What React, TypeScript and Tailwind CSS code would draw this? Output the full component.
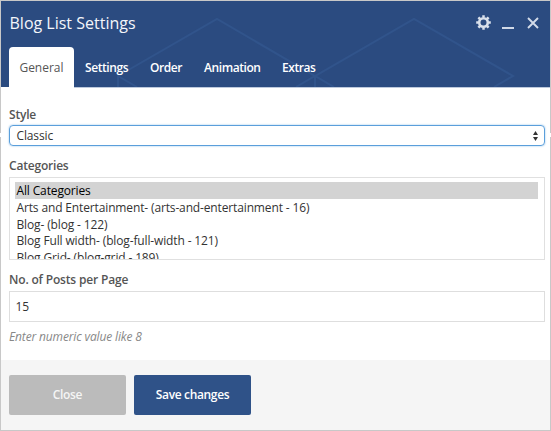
import React from "react";

const tabs = [
  { label: "Settings", cls: "ml-[11px] w-[65px]" },
  { label: "Order", cls: "w-[54px]" },
  { label: "Animation", cls: "w-[78px]" },
  { label: "Extras", cls: "w-[56px]" },
];

const categories = [
  "All Categories",
  "Arts and Entertainment- (arts-and-entertainment - 16)",
  "Blog- (blog - 122)",
  "Blog Full width- (blog-full-width - 121)",
  "Blog Grid- (blog-grid - 189)",
];

function Pattern() {
  return (
    <svg className="absolute inset-0" width="549" height="86" fill="none" stroke="#31548b" strokeWidth="2">
      <path d="M117 86V75L216 18L314 75L413 18L512 75L493 86M117 75L136 86M314 75V86M295 86L314 75L333 86" />
    </svg>
  );
}

function Header() {
  return (
    <header className="relative flex h-[86px] shrink-0 flex-col bg-[#2b4b80]">
      <Pattern />
      <div className="relative flex h-[46px] items-center pl-[8.5px] pr-[11px]">
        <h1 className="mt-[-3px] grow text-[16px] leading-6 text-[#f4f6fa]">Blog List Settings</h1>
        <svg className="mt-[-3px]" width="15" height="15" viewBox="0 0 15 15">
          <circle cx="7.5" cy="7.5" r="4.3" fill="none" stroke="#d9e0eb" strokeWidth="2.6" />
          <path
            d="M7.5 .2V2.5M7.5 12.5V14.8M.2 7.5H2.5M12.5 7.5H14.8M2.4 2.4L4 4M11 11L12.6 12.6M12.6 2.4L11 4M4 11L2.4 12.6"
            stroke="#d9e0eb"
            strokeWidth="2.5"
          />
        </svg>
        <div className="ml-[11px] mt-[8px] h-[2px] w-3 bg-[#d1d9e7]" />
        <svg className="ml-[13px] mt-[-2px]" width="12" height="12" viewBox="0 0 12 12">
          <path d="M1 1L11 11M11 1L1 11" stroke="#d3dbe8" strokeWidth="1.9" />
        </svg>
      </div>
      <nav className="relative flex h-10 pl-2 text-[12px] font-semibold leading-[41px] tracking-[-0.42px] text-white">
        <span className="w-[65px] rounded-t-[4px] bg-white text-center font-normal tracking-normal text-[#555]">General</span>
        {tabs.map((t) => (
          <span key={t.label} className={t.cls}>{t.label}</span>
        ))}
      </nav>
    </header>
  );
}

export default function App() {
  return (
    <div className="relative flex h-[431px] w-[551px] flex-col border border-[#c8c8c8] bg-white font-['Open_Sans','Noto_Sans',sans-serif] text-[12px] text-[#333]">
      <div className="absolute -left-px top-[132px] h-1 w-px bg-white" />
      <div className="absolute -right-px top-[132px] h-1 w-px bg-white" />
      <Header />
      <div className="ml-[73px] h-px shrink-0 bg-[#bdc9dc]" />
      <main className="flex h-[272px] shrink-0 flex-col pl-2 pr-[5px]">
        <label className="mt-[19px] h-4 text-[12px] font-semibold leading-4 tracking-[-0.2px] text-[#555]">Style</label>
        <div className="mt-[2px] flex h-[21px] items-center justify-between rounded-[4px] border border-[#5b9fdb] pl-[6.5px] pr-1.5 shadow-[0_0_2px_#8bbde8]">
          <span className="tracking-[-0.13px]">Classic</span>
          <svg width="5" height="10" viewBox="0 0 5 10" fill="#333">
            <path d="M2.5 0L5 4H0ZM0 6H5L2.5 10Z" />
          </svg>
        </div>
        <label className="mt-[12px] h-4 text-[12px] font-semibold leading-4 tracking-[-0.2px] text-[#555]">Categories</label>
        <div className="mt-[3px] h-[83px] overflow-hidden border border-[#e0e0e0] pl-[5px] pr-[6px] pt-[4px] tracking-[-0.14px]">
          {categories.map((c, i) => (
            <div key={c} className={`h-[16.8px] pl-[1.5px] leading-[17px] ${i === 0 ? "bg-[#d3d3d3] text-black" : ""}`}>{c}</div>
          ))}
        </div>
        <label className="mt-[12px] h-4 text-[12px] font-semibold leading-4 tracking-[-0.17px] text-[#555]">No. of Posts per Page</label>
        <div className="mt-[3px] flex h-[31px] items-center border border-[#dedede] pl-[5.5px] pt-px">15</div>
        <p className="mt-[7px] h-4 text-[12px] italic leading-4 tracking-[-0.14px] text-[#888]">Enter numeric value like 8</p>
      </main>
      <footer className="flex grow gap-2 bg-[#f5f5f5] pl-2 pt-[15px] text-[12px] font-semibold tracking-[-0.35px]">
        <button className="h-10 w-[117px] rounded-[2px] bg-[#bbb] text-[#f5f5f5]">Close</button>
        <button className="h-10 w-[117px] rounded-[2px] bg-[#2f5288] text-white">Save changes</button>
      </footer>
    </div>
  );
}
